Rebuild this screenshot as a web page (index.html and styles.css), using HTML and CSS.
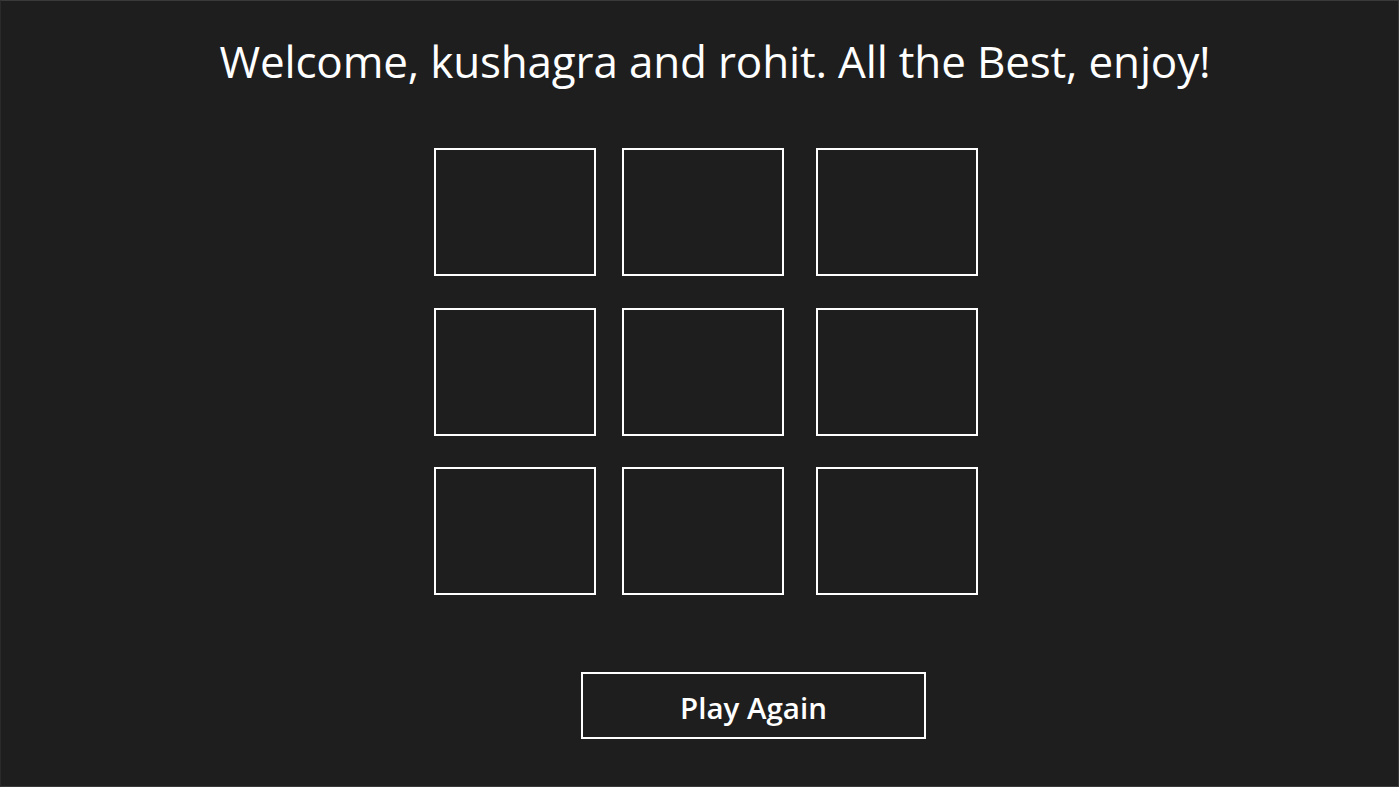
FILE: index.html
```html
<!DOCTYPE html>
<html lang="en">
<head>
  <meta charset="UTF-8" />
  <meta name="viewport" content="width=device-width, initial-scale=1.0" />
  <title>Tic Tac Toe</title>
  <link rel="stylesheet" href="styles.css">
</head>

<body>
  <div class="app">
    <h1 class="welcome">Welcome, kushagra and rohit. All the Best, enjoy!</h1>

    <div class="board">
      <button class="cell"></button>
      <button class="cell"></button>
      <button class="cell"></button>
      <button class="cell"></button>
      <button class="cell"></button>
      <button class="cell"></button>
      <button class="cell"></button>
      <button class="cell"></button>
      <button class="cell"></button>
    </div>

    <button class="play-again">Play Again</button>
  </div>
</body>
</html>
```

FILE: styles.css
```css
html, body {
  margin: 0;
  padding: 0;
  background: #1e1e1e;
}

body {
  font-family: "Segoe UI", "Open Sans", "Noto Sans", sans-serif;
  color: #fff;
}

.app {
  box-sizing: border-box;
  height: 787px;
  border: 1px solid #3a3a3a;
  border-left-color: #2a2a2a;
  display: flex;
  flex-direction: column;
  align-items: flex-start;
}

.welcome {
  align-self: stretch;
  margin: 32px 0 0;
  padding-left: 31px;
  text-align: center;
  font-size: 44px;
  font-weight: 400;
  letter-spacing: -0.17px;
  line-height: 56px;
}

.board {
  margin: 59px 0 0 433px;
  display: grid;
  grid-template-columns: 162px 162px 168px;
  grid-template-rows: repeat(3, 128px);
  column-gap: 26px;
  row-gap: 31.5px;
}

.cell {
  width: 162px;
  height: 128px;
  background: transparent;
  border: 2px solid #fff;
  padding: 0;
  cursor: pointer;
}

.cell:nth-child(3n) {
  justify-self: end;
}

.play-again {
  margin: 77px 0 0 580px;
  width: 345px;
  height: 67px;
  padding: 4px 0 0;
  background: transparent;
  border: 2px solid #fff;
  color: #fff;
  font-family: inherit;
  font-size: 29.5px;
  font-weight: 600;
  cursor: pointer;
}
```
